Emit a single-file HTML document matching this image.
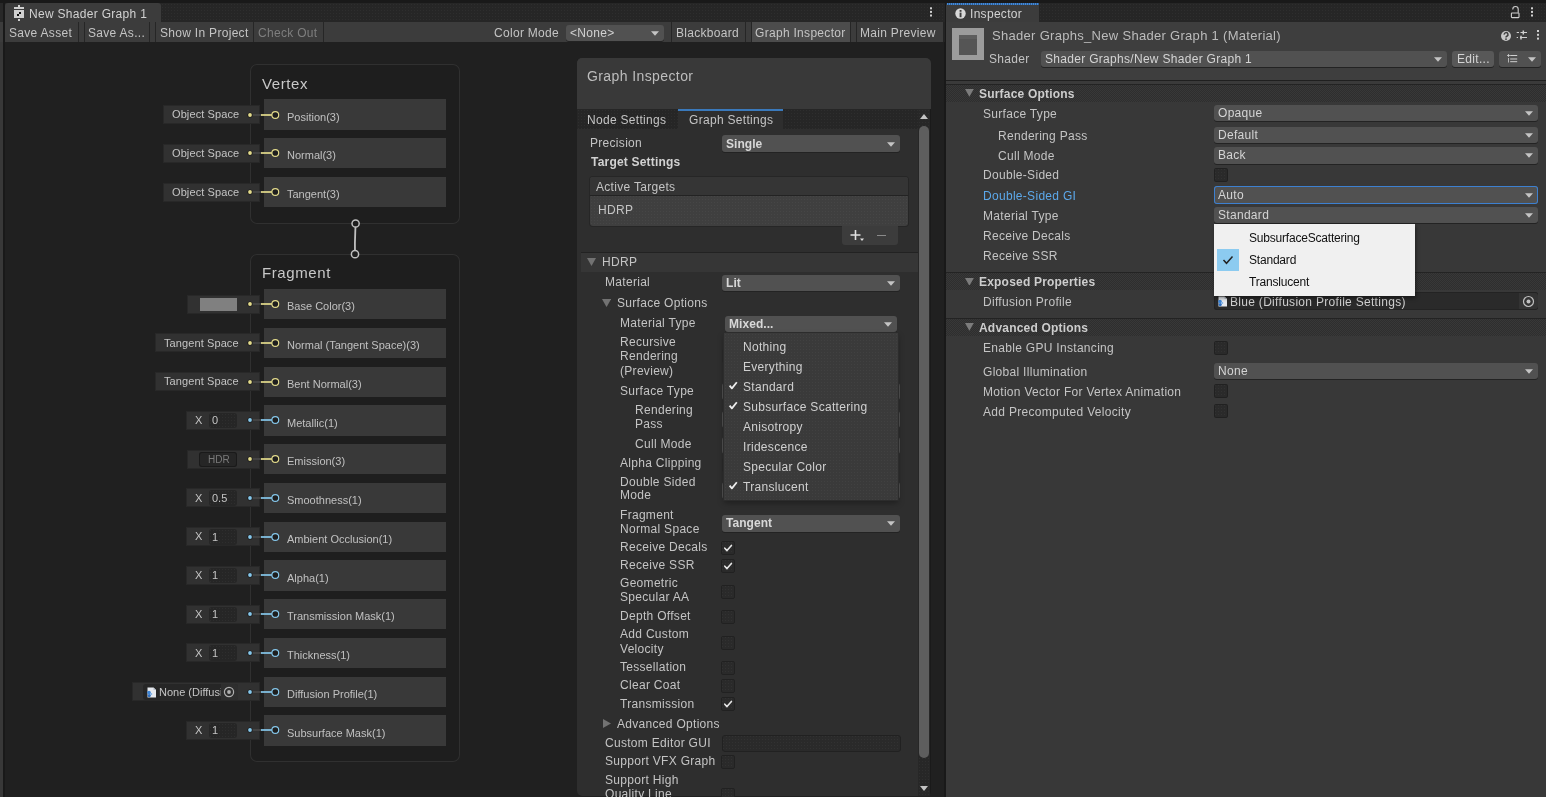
<!DOCTYPE html>
<html><head><meta charset="utf-8"><style>
html,body{margin:0;padding:0;width:1546px;height:797px;overflow:hidden;background:#191919;}
body{position:relative;font-family:"Liberation Sans", sans-serif;}
body>div,body>svg{position:absolute;}
.t{white-space:nowrap;line-height:1;will-change:transform;}
</style></head><body>
<div style="left:0px;top:0px;width:1546px;height:797px;background:#191919;"></div>
<div style="left:0px;top:3px;width:3px;height:794px;background:#383838;"></div>
<div style="left:0px;top:3px;width:3px;height:19px;background:#282828;"></div>
<div style="left:0px;top:22px;width:3px;height:20px;background:#3c3c3c;"></div>
<div style="left:5px;top:3px;width:940px;height:19px;background:#262626;background-image:radial-gradient(rgba(255,255,255,0.035) 0.6px, transparent 0.7px);background-size:3px 3px;"></div>
<div style="left:5px;top:3px;width:156px;height:19px;background:#3c3c3c;border-radius:3px 3px 0 0;"></div>
<svg style="left:13px;top:4px;" width="12" height="18" viewBox="0 0 12 18">
<rect x="1" y="3" width="10" height="2" fill="#d0d0d0"/>
<rect x="5" y="1" width="2" height="2" fill="#d0d0d0"/>
<rect x="1" y="6" width="10" height="8" fill="#cfcfcf"/>
<rect x="6" y="8" width="2" height="2" fill="#111"/>
<rect x="4" y="10" width="2" height="2" fill="#111"/>
<rect x="5" y="15" width="2" height="2" fill="#d0d0d0"/>
</svg>
<div class="t" style="left:29.2px;top:7.84px;font-size:12px;color:#d2d2d2;letter-spacing:0.3px;">New Shader Graph 1</div>
<svg style="left:929px;top:6px;" width="4" height="12" viewBox="0 0 4 12"><rect x="1" y="1.3" width="2" height="2" fill="#d0d0d0"/><rect x="1" y="4.9" width="2" height="2" fill="#d0d0d0"/><rect x="1" y="8.5" width="2" height="2" fill="#d0d0d0"/></svg>
<div style="left:5px;top:22px;width:939px;height:20px;background:#3c3c3c;"></div>
<div style="left:78px;top:22px;width:1px;height:20px;background:#262626;"></div>
<div style="left:84px;top:22px;width:1px;height:20px;background:#262626;"></div>
<div style="left:149px;top:22px;width:1px;height:20px;background:#262626;"></div>
<div style="left:155px;top:22px;width:1px;height:20px;background:#262626;"></div>
<div style="left:253px;top:22px;width:1px;height:20px;background:#262626;"></div>
<div style="left:323px;top:22px;width:1px;height:20px;background:#262626;"></div>
<div style="left:671px;top:22px;width:1px;height:20px;background:#262626;"></div>
<div style="left:745px;top:22px;width:1px;height:20px;background:#262626;"></div>
<div style="left:751px;top:22px;width:1px;height:20px;background:#262626;"></div>
<div style="left:850px;top:22px;width:1px;height:20px;background:#262626;"></div>
<div style="left:856px;top:22px;width:1px;height:20px;background:#262626;"></div>
<div class="t" style="left:8.6px;top:26.84px;font-size:12px;color:#c4c4c4;letter-spacing:0.3px;">Save Asset</div>
<div class="t" style="left:87.5px;top:26.84px;font-size:12px;color:#c4c4c4;letter-spacing:0.3px;">Save As...</div>
<div class="t" style="left:160.0px;top:26.84px;font-size:12px;color:#c4c4c4;letter-spacing:0.3px;">Show In Project</div>
<div class="t" style="left:258.0px;top:26.84px;font-size:12px;color:#7e7e7e;letter-spacing:0.3px;">Check Out</div>
<div class="t" style="left:494.2px;top:26.84px;font-size:12px;color:#c4c4c4;letter-spacing:0.3px;">Color Mode</div>
<div style="left:566px;top:25px;width:98px;height:16px;background:#515151;border-radius:3px;box-shadow:0 1px 0 #232323;"></div>
<div class="t" style="left:569.8000000000001px;top:27.14px;font-size:12px;color:#d2d2d2;letter-spacing:0.3px;">&lt;None&gt;</div>
<svg style="left:651px;top:31.0px;" width="8" height="5" viewBox="0 0 8 5"><polygon points="0,0.2 8,0.2 4,4.7" fill="#c4c4c4"/></svg>
<div class="t" style="left:676.0px;top:26.84px;font-size:12px;color:#c4c4c4;letter-spacing:0.3px;">Blackboard</div>
<div style="left:752px;top:22px;width:98px;height:20px;background:#4c4c4c;"></div>
<div class="t" style="left:755.0px;top:26.84px;font-size:12px;color:#c4c4c4;letter-spacing:0.3px;">Graph Inspector</div>
<div class="t" style="left:860.0px;top:26.84px;font-size:12px;color:#c4c4c4;letter-spacing:0.3px;">Main Preview</div>
<div style="left:943px;top:22px;width:2px;height:20px;background:#232323;"></div>
<div style="left:5px;top:42px;width:939px;height:755px;background:#202020;"></div>
<div style="left:250px;top:64px;width:210px;height:160px;background:#1e1e1e;border-radius:7px;box-shadow:inset 0 0 0 1px #303030;"></div>
<div class="t" style="left:261.7px;top:75.90px;font-size:15px;color:#c8c8c8;letter-spacing:0.6px;">Vertex</div>
<div style="left:164px;top:106.0px;width:95px;height:17px;background:#313131;box-shadow:0 0 0 1px #282828;"></div>
<div class="t" style="left:172.2px;top:109.19px;font-size:11px;color:#c4c4c4;letter-spacing:0.1px;">Object Space</div>
<div style="left:264px;top:99.3px;width:182px;height:30.3px;background:#393939;"></div>
<svg style="left:246px;top:106.5px;" width="36" height="16" viewBox="0 0 36 16">
<line x1="4" y1="8" x2="16" y2="8" stroke="#4a4a4a" stroke-width="1.6"/>
<line x1="15" y1="8" x2="26" y2="8" stroke="#e4dc8c" stroke-width="1.7"/>
<circle cx="4" cy="8" r="2.6" fill="#181818"/><circle cx="4" cy="8" r="1.9" fill="#e4dc8c"/>
<circle cx="29.3" cy="8" r="3.4" fill="#1e1e1e" stroke="#e4dc8c" stroke-width="1.15"/></svg>
<div class="t" style="left:287.2px;top:111.59px;font-size:11px;color:#c0c0c0;">Position(3)</div>
<div style="left:164px;top:144.75px;width:95px;height:17px;background:#313131;box-shadow:0 0 0 1px #282828;"></div>
<div class="t" style="left:172.2px;top:147.94px;font-size:11px;color:#c4c4c4;letter-spacing:0.1px;">Object Space</div>
<div style="left:264px;top:138.05px;width:182px;height:30.3px;background:#393939;"></div>
<svg style="left:246px;top:145.25px;" width="36" height="16" viewBox="0 0 36 16">
<line x1="4" y1="8" x2="16" y2="8" stroke="#4a4a4a" stroke-width="1.6"/>
<line x1="15" y1="8" x2="26" y2="8" stroke="#e4dc8c" stroke-width="1.7"/>
<circle cx="4" cy="8" r="2.6" fill="#181818"/><circle cx="4" cy="8" r="1.9" fill="#e4dc8c"/>
<circle cx="29.3" cy="8" r="3.4" fill="#1e1e1e" stroke="#e4dc8c" stroke-width="1.15"/></svg>
<div class="t" style="left:287.2px;top:150.34px;font-size:11px;color:#c0c0c0;">Normal(3)</div>
<div style="left:164px;top:183.5px;width:95px;height:17px;background:#313131;box-shadow:0 0 0 1px #282828;"></div>
<div class="t" style="left:172.2px;top:186.69px;font-size:11px;color:#c4c4c4;letter-spacing:0.1px;">Object Space</div>
<div style="left:264px;top:176.8px;width:182px;height:30.3px;background:#393939;"></div>
<svg style="left:246px;top:184.0px;" width="36" height="16" viewBox="0 0 36 16">
<line x1="4" y1="8" x2="16" y2="8" stroke="#4a4a4a" stroke-width="1.6"/>
<line x1="15" y1="8" x2="26" y2="8" stroke="#e4dc8c" stroke-width="1.7"/>
<circle cx="4" cy="8" r="2.6" fill="#181818"/><circle cx="4" cy="8" r="1.9" fill="#e4dc8c"/>
<circle cx="29.3" cy="8" r="3.4" fill="#1e1e1e" stroke="#e4dc8c" stroke-width="1.15"/></svg>
<div class="t" style="left:287.2px;top:189.09px;font-size:11px;color:#c0c0c0;">Tangent(3)</div>
<div style="left:250px;top:254px;width:210px;height:508px;background:#1e1e1e;border-radius:7px;box-shadow:inset 0 0 0 1px #303030;"></div>
<div class="t" style="left:261.7px;top:265.20px;font-size:15px;color:#c8c8c8;letter-spacing:0.6px;">Fragment</div>
<div style="left:188px;top:295.7px;width:71px;height:17px;background:#313131;box-shadow:0 0 0 1px #282828;"></div>
<div style="left:200px;top:298.0px;width:37px;height:13px;background:#808080;"></div>
<div style="left:264px;top:289.0px;width:182px;height:30.3px;background:#393939;"></div>
<svg style="left:246px;top:296.2px;" width="36" height="16" viewBox="0 0 36 16">
<line x1="4" y1="8" x2="16" y2="8" stroke="#4a4a4a" stroke-width="1.6"/>
<line x1="15" y1="8" x2="26" y2="8" stroke="#e4dc8c" stroke-width="1.7"/>
<circle cx="4" cy="8" r="2.6" fill="#181818"/><circle cx="4" cy="8" r="1.9" fill="#e4dc8c"/>
<circle cx="29.3" cy="8" r="3.4" fill="#1e1e1e" stroke="#e4dc8c" stroke-width="1.15"/></svg>
<div class="t" style="left:287.2px;top:301.29px;font-size:11px;color:#c0c0c0;">Base Color(3)</div>
<div style="left:155.5px;top:334.45px;width:103.5px;height:17px;background:#313131;box-shadow:0 0 0 1px #282828;"></div>
<div class="t" style="left:164.2px;top:337.64px;font-size:11px;color:#c4c4c4;letter-spacing:0.1px;">Tangent Space</div>
<div style="left:264px;top:327.75px;width:182px;height:30.3px;background:#393939;"></div>
<svg style="left:246px;top:334.95px;" width="36" height="16" viewBox="0 0 36 16">
<line x1="4" y1="8" x2="16" y2="8" stroke="#4a4a4a" stroke-width="1.6"/>
<line x1="15" y1="8" x2="26" y2="8" stroke="#e4dc8c" stroke-width="1.7"/>
<circle cx="4" cy="8" r="2.6" fill="#181818"/><circle cx="4" cy="8" r="1.9" fill="#e4dc8c"/>
<circle cx="29.3" cy="8" r="3.4" fill="#1e1e1e" stroke="#e4dc8c" stroke-width="1.15"/></svg>
<div class="t" style="left:287.2px;top:340.04px;font-size:11px;color:#c0c0c0;">Normal (Tangent Space)(3)</div>
<div style="left:155.5px;top:373.2px;width:103.5px;height:17px;background:#313131;box-shadow:0 0 0 1px #282828;"></div>
<div class="t" style="left:164.2px;top:376.39px;font-size:11px;color:#c4c4c4;letter-spacing:0.1px;">Tangent Space</div>
<div style="left:264px;top:366.5px;width:182px;height:30.3px;background:#393939;"></div>
<svg style="left:246px;top:373.7px;" width="36" height="16" viewBox="0 0 36 16">
<line x1="4" y1="8" x2="16" y2="8" stroke="#4a4a4a" stroke-width="1.6"/>
<line x1="15" y1="8" x2="26" y2="8" stroke="#e4dc8c" stroke-width="1.7"/>
<circle cx="4" cy="8" r="2.6" fill="#181818"/><circle cx="4" cy="8" r="1.9" fill="#e4dc8c"/>
<circle cx="29.3" cy="8" r="3.4" fill="#1e1e1e" stroke="#e4dc8c" stroke-width="1.15"/></svg>
<div class="t" style="left:287.2px;top:378.79px;font-size:11px;color:#c0c0c0;">Bent Normal(3)</div>
<div style="left:187px;top:411.95px;width:72px;height:17px;background:#313131;box-shadow:0 0 0 1px #282828;"></div>
<div class="t" style="left:195.2px;top:415.14px;font-size:11px;color:#c4c4c4;">X</div>
<div style="left:209px;top:412.75px;width:27.5px;height:15.5px;background:#262626;border-radius:3px;background-image:radial-gradient(rgba(255,255,255,0.035) 0.6px, transparent 0.7px);background-size:3px 3px;"></div>
<div class="t" style="left:211.7px;top:415.34px;font-size:11px;color:#c4c4c4;">0</div>
<div style="left:264px;top:405.25px;width:182px;height:30.3px;background:#393939;"></div>
<svg style="left:246px;top:412.45px;" width="36" height="16" viewBox="0 0 36 16">
<line x1="4" y1="8" x2="16" y2="8" stroke="#4a4a4a" stroke-width="1.6"/>
<line x1="15" y1="8" x2="26" y2="8" stroke="#86c8ec" stroke-width="1.7"/>
<circle cx="4" cy="8" r="2.6" fill="#181818"/><circle cx="4" cy="8" r="1.9" fill="#86c8ec"/>
<circle cx="29.3" cy="8" r="3.4" fill="#1e1e1e" stroke="#86c8ec" stroke-width="1.15"/></svg>
<div class="t" style="left:287.2px;top:417.54px;font-size:11px;color:#c0c0c0;">Metallic(1)</div>
<div style="left:188px;top:450.7px;width:71px;height:17px;background:#313131;box-shadow:0 0 0 1px #282828;"></div>
<div style="left:199px;top:452.0px;width:38.2px;height:14.5px;background:#262626;border-radius:3px;box-shadow:inset 0 0 0 1px #1a1a1a;"></div>
<div class="t" style="left:207.5px;top:454.54px;font-size:10px;color:#7a7a7a;">HDR</div>
<div style="left:264px;top:444.0px;width:182px;height:30.3px;background:#393939;"></div>
<svg style="left:246px;top:451.2px;" width="36" height="16" viewBox="0 0 36 16">
<line x1="4" y1="8" x2="16" y2="8" stroke="#4a4a4a" stroke-width="1.6"/>
<line x1="15" y1="8" x2="26" y2="8" stroke="#e4dc8c" stroke-width="1.7"/>
<circle cx="4" cy="8" r="2.6" fill="#181818"/><circle cx="4" cy="8" r="1.9" fill="#e4dc8c"/>
<circle cx="29.3" cy="8" r="3.4" fill="#1e1e1e" stroke="#e4dc8c" stroke-width="1.15"/></svg>
<div class="t" style="left:287.2px;top:456.29px;font-size:11px;color:#c0c0c0;">Emission(3)</div>
<div style="left:187px;top:489.45px;width:72px;height:17px;background:#313131;box-shadow:0 0 0 1px #282828;"></div>
<div class="t" style="left:195.2px;top:492.64px;font-size:11px;color:#c4c4c4;">X</div>
<div style="left:209px;top:490.25px;width:27.5px;height:15.5px;background:#262626;border-radius:3px;background-image:radial-gradient(rgba(255,255,255,0.035) 0.6px, transparent 0.7px);background-size:3px 3px;"></div>
<div class="t" style="left:211.7px;top:492.84px;font-size:11px;color:#c4c4c4;">0.5</div>
<div style="left:264px;top:482.75px;width:182px;height:30.3px;background:#393939;"></div>
<svg style="left:246px;top:489.95px;" width="36" height="16" viewBox="0 0 36 16">
<line x1="4" y1="8" x2="16" y2="8" stroke="#4a4a4a" stroke-width="1.6"/>
<line x1="15" y1="8" x2="26" y2="8" stroke="#86c8ec" stroke-width="1.7"/>
<circle cx="4" cy="8" r="2.6" fill="#181818"/><circle cx="4" cy="8" r="1.9" fill="#86c8ec"/>
<circle cx="29.3" cy="8" r="3.4" fill="#1e1e1e" stroke="#86c8ec" stroke-width="1.15"/></svg>
<div class="t" style="left:287.2px;top:495.04px;font-size:11px;color:#c0c0c0;">Smoothness(1)</div>
<div style="left:187px;top:528.2px;width:72px;height:17px;background:#313131;box-shadow:0 0 0 1px #282828;"></div>
<div class="t" style="left:195.2px;top:531.39px;font-size:11px;color:#c4c4c4;">X</div>
<div style="left:209px;top:529.0px;width:27.5px;height:15.5px;background:#262626;border-radius:3px;background-image:radial-gradient(rgba(255,255,255,0.035) 0.6px, transparent 0.7px);background-size:3px 3px;"></div>
<div class="t" style="left:211.7px;top:531.59px;font-size:11px;color:#c4c4c4;">1</div>
<div style="left:264px;top:521.5px;width:182px;height:30.3px;background:#393939;"></div>
<svg style="left:246px;top:528.7px;" width="36" height="16" viewBox="0 0 36 16">
<line x1="4" y1="8" x2="16" y2="8" stroke="#4a4a4a" stroke-width="1.6"/>
<line x1="15" y1="8" x2="26" y2="8" stroke="#86c8ec" stroke-width="1.7"/>
<circle cx="4" cy="8" r="2.6" fill="#181818"/><circle cx="4" cy="8" r="1.9" fill="#86c8ec"/>
<circle cx="29.3" cy="8" r="3.4" fill="#1e1e1e" stroke="#86c8ec" stroke-width="1.15"/></svg>
<div class="t" style="left:287.2px;top:533.79px;font-size:11px;color:#c0c0c0;">Ambient Occlusion(1)</div>
<div style="left:187px;top:566.95px;width:72px;height:17px;background:#313131;box-shadow:0 0 0 1px #282828;"></div>
<div class="t" style="left:195.2px;top:570.14px;font-size:11px;color:#c4c4c4;">X</div>
<div style="left:209px;top:567.75px;width:27.5px;height:15.5px;background:#262626;border-radius:3px;background-image:radial-gradient(rgba(255,255,255,0.035) 0.6px, transparent 0.7px);background-size:3px 3px;"></div>
<div class="t" style="left:211.7px;top:570.34px;font-size:11px;color:#c4c4c4;">1</div>
<div style="left:264px;top:560.25px;width:182px;height:30.3px;background:#393939;"></div>
<svg style="left:246px;top:567.45px;" width="36" height="16" viewBox="0 0 36 16">
<line x1="4" y1="8" x2="16" y2="8" stroke="#4a4a4a" stroke-width="1.6"/>
<line x1="15" y1="8" x2="26" y2="8" stroke="#86c8ec" stroke-width="1.7"/>
<circle cx="4" cy="8" r="2.6" fill="#181818"/><circle cx="4" cy="8" r="1.9" fill="#86c8ec"/>
<circle cx="29.3" cy="8" r="3.4" fill="#1e1e1e" stroke="#86c8ec" stroke-width="1.15"/></svg>
<div class="t" style="left:287.2px;top:572.54px;font-size:11px;color:#c0c0c0;">Alpha(1)</div>
<div style="left:187px;top:605.7px;width:72px;height:17px;background:#313131;box-shadow:0 0 0 1px #282828;"></div>
<div class="t" style="left:195.2px;top:608.89px;font-size:11px;color:#c4c4c4;">X</div>
<div style="left:209px;top:606.5px;width:27.5px;height:15.5px;background:#262626;border-radius:3px;background-image:radial-gradient(rgba(255,255,255,0.035) 0.6px, transparent 0.7px);background-size:3px 3px;"></div>
<div class="t" style="left:211.7px;top:609.09px;font-size:11px;color:#c4c4c4;">1</div>
<div style="left:264px;top:599.0px;width:182px;height:30.3px;background:#393939;"></div>
<svg style="left:246px;top:606.2px;" width="36" height="16" viewBox="0 0 36 16">
<line x1="4" y1="8" x2="16" y2="8" stroke="#4a4a4a" stroke-width="1.6"/>
<line x1="15" y1="8" x2="26" y2="8" stroke="#86c8ec" stroke-width="1.7"/>
<circle cx="4" cy="8" r="2.6" fill="#181818"/><circle cx="4" cy="8" r="1.9" fill="#86c8ec"/>
<circle cx="29.3" cy="8" r="3.4" fill="#1e1e1e" stroke="#86c8ec" stroke-width="1.15"/></svg>
<div class="t" style="left:287.2px;top:611.29px;font-size:11px;color:#c0c0c0;">Transmission Mask(1)</div>
<div style="left:187px;top:644.45px;width:72px;height:17px;background:#313131;box-shadow:0 0 0 1px #282828;"></div>
<div class="t" style="left:195.2px;top:647.64px;font-size:11px;color:#c4c4c4;">X</div>
<div style="left:209px;top:645.25px;width:27.5px;height:15.5px;background:#262626;border-radius:3px;background-image:radial-gradient(rgba(255,255,255,0.035) 0.6px, transparent 0.7px);background-size:3px 3px;"></div>
<div class="t" style="left:211.7px;top:647.84px;font-size:11px;color:#c4c4c4;">1</div>
<div style="left:264px;top:637.75px;width:182px;height:30.3px;background:#393939;"></div>
<svg style="left:246px;top:644.95px;" width="36" height="16" viewBox="0 0 36 16">
<line x1="4" y1="8" x2="16" y2="8" stroke="#4a4a4a" stroke-width="1.6"/>
<line x1="15" y1="8" x2="26" y2="8" stroke="#86c8ec" stroke-width="1.7"/>
<circle cx="4" cy="8" r="2.6" fill="#181818"/><circle cx="4" cy="8" r="1.9" fill="#86c8ec"/>
<circle cx="29.3" cy="8" r="3.4" fill="#1e1e1e" stroke="#86c8ec" stroke-width="1.15"/></svg>
<div class="t" style="left:287.2px;top:650.04px;font-size:11px;color:#c0c0c0;">Thickness(1)</div>
<div style="left:133px;top:683.2px;width:126px;height:17px;background:#313131;box-shadow:0 0 0 1px #282828;"></div>
<div style="left:143px;top:684.0px;width:94.5px;height:16px;background:#262626;border-radius:3px;"></div>
<svg style="left:146px;top:686.5px;" width="11" height="11" viewBox="0 0 11 11"><path d="M1.5 0.5 H7.5 L10 3 V10.5 H1.5Z" fill="#e6e9ee"/><path d="M7.5 0.5 V3 H10" fill="#b8c0ca"/><circle cx="3" cy="5.5" r="1.8" fill="#3d86d8"/><circle cx="3.2" cy="8.6" r="1.6" fill="#2f6fc0"/><circle cx="5.2" cy="7" r="1.1" fill="#7fb2e8"/></svg>
<div class="t" style="left:159px;top:686.50px;width:62px;overflow:hidden;font-size:11px;color:#c4c4c4;">None (Diffusion Profile Settings)</div>
<div style="left:221px;top:684.0px;width:16.5px;height:16px;background:#2e2e2e;border-radius:0 3px 3px 0;"></div>
<svg style="left:223px;top:686.0px;" width="12" height="12" viewBox="0 0 12 12"><circle cx="6" cy="6" r="4.6" fill="none" stroke="#b0b0b0" stroke-width="1.2"/><circle cx="6" cy="6" r="1.9" fill="#b0b0b0"/></svg>
<div style="left:264px;top:676.5px;width:182px;height:30.3px;background:#393939;"></div>
<svg style="left:246px;top:683.7px;" width="36" height="16" viewBox="0 0 36 16">
<line x1="4" y1="8" x2="16" y2="8" stroke="#4a4a4a" stroke-width="1.6"/>
<line x1="15" y1="8" x2="26" y2="8" stroke="#86c8ec" stroke-width="1.7"/>
<circle cx="4" cy="8" r="2.6" fill="#181818"/><circle cx="4" cy="8" r="1.9" fill="#86c8ec"/>
<circle cx="29.3" cy="8" r="3.4" fill="#1e1e1e" stroke="#86c8ec" stroke-width="1.15"/></svg>
<div class="t" style="left:287.2px;top:688.79px;font-size:11px;color:#c0c0c0;">Diffusion Profile(1)</div>
<div style="left:187px;top:721.95px;width:72px;height:17px;background:#313131;box-shadow:0 0 0 1px #282828;"></div>
<div class="t" style="left:195.2px;top:725.14px;font-size:11px;color:#c4c4c4;">X</div>
<div style="left:209px;top:722.75px;width:27.5px;height:15.5px;background:#262626;border-radius:3px;background-image:radial-gradient(rgba(255,255,255,0.035) 0.6px, transparent 0.7px);background-size:3px 3px;"></div>
<div class="t" style="left:211.7px;top:725.34px;font-size:11px;color:#c4c4c4;">1</div>
<div style="left:264px;top:715.25px;width:182px;height:30.3px;background:#393939;"></div>
<svg style="left:246px;top:722.45px;" width="36" height="16" viewBox="0 0 36 16">
<line x1="4" y1="8" x2="16" y2="8" stroke="#4a4a4a" stroke-width="1.6"/>
<line x1="15" y1="8" x2="26" y2="8" stroke="#86c8ec" stroke-width="1.7"/>
<circle cx="4" cy="8" r="2.6" fill="#181818"/><circle cx="4" cy="8" r="1.9" fill="#86c8ec"/>
<circle cx="29.3" cy="8" r="3.4" fill="#1e1e1e" stroke="#86c8ec" stroke-width="1.15"/></svg>
<div class="t" style="left:287.2px;top:727.54px;font-size:11px;color:#c0c0c0;">Subsurface Mask(1)</div>
<svg style="left:348px;top:216px;" width="16" height="46" viewBox="0 0 16 46">
<path d="M7.6 7.5 C7.4 16 6.6 22 7 38" fill="none" stroke="#c0c0c0" stroke-width="1.8"/>
<circle cx="7.6" cy="7.5" r="3.6" fill="#1e1e1e" stroke="#c0c0c0" stroke-width="1.5"/>
<circle cx="7" cy="38.2" r="3.6" fill="#1e1e1e" stroke="#c0c0c0" stroke-width="1.5"/></svg>
<div style="left:577px;top:58px;width:354px;height:738px;background:#1a1a1a;border-radius:5px;"></div>
<div style="left:577px;top:58px;width:353px;height:738px;background:#2e2e2e;border-radius:5px;"></div>
<div style="left:577px;top:58px;width:353.5px;height:51px;background:#393939;border-radius:5px 5px 0 0;"></div>
<div class="t" style="left:587.2px;top:68.75px;font-size:14px;color:#bdbdbd;letter-spacing:0.4px;">Graph Inspector</div>
<div style="left:577px;top:109px;width:341px;height:20px;background:#262626;background-image:radial-gradient(rgba(255,255,255,0.035) 0.6px, transparent 0.7px);background-size:3px 3px;"></div>
<div style="left:678px;top:109px;width:105px;height:20px;background:#2e2e2e;"></div>
<div style="left:678px;top:109px;width:105px;height:2px;background:#3a79bb;"></div>
<div class="t" style="left:587.2px;top:113.84px;font-size:12px;color:#c4c4c4;letter-spacing:0.3px;">Node Settings</div>
<div class="t" style="left:688.6px;top:113.84px;font-size:12px;color:#c4c4c4;letter-spacing:0.3px;">Graph Settings</div>
<div style="left:918px;top:109px;width:12px;height:687px;background:#272727;background-image:radial-gradient(rgba(255,255,255,0.035) 0.6px, transparent 0.7px);background-size:3px 3px;"></div>
<svg style="left:919px;top:113px;" width="10" height="7" viewBox="0 0 10 7"><polygon points="1,6 9,6 5,1" fill="#c4c4c4"/></svg>
<div style="left:919px;top:126px;width:10px;height:632px;background:#5e5e5e;border-radius:5px;"></div>
<svg style="left:919px;top:785px;" width="10" height="7" viewBox="0 0 10 7"><polygon points="1,1 9,1 5,6" fill="#c4c4c4"/></svg>
<div class="t" style="left:589.9000000000001px;top:136.84px;font-size:12px;color:#c4c4c4;letter-spacing:0.3px;">Precision</div>
<div style="left:722px;top:135px;width:178px;height:17px;background:#515151;border-radius:3px;box-shadow:0 1px 0 #232323;"></div>
<div class="t" style="left:725.8000000000001px;top:137.64px;font-size:12px;color:#d8d8d8;font-weight:bold;letter-spacing:0.05px;">Single</div>
<svg style="left:887px;top:141.5px;" width="8" height="5" viewBox="0 0 8 5"><polygon points="0,0.2 8,0.2 4,4.7" fill="#c4c4c4"/></svg>
<div class="t" style="left:590.5px;top:155.54px;font-size:12px;color:#d2d2d2;font-weight:bold;letter-spacing:0.2px;">Target Settings</div>
<div style="left:590px;top:177px;width:318px;height:49px;background:#3f3f3f;border-radius:3px;box-shadow:0 0 0 1px #262626;background-image:radial-gradient(rgba(255,255,255,0.035) 0.6px, transparent 0.7px);background-size:3px 3px;"></div>
<div style="left:590px;top:177px;width:318px;height:18px;background:#353535;border-radius:3px 3px 0 0;"></div>
<div style="left:590px;top:195px;width:318px;height:1px;background:#232323;"></div>
<div class="t" style="left:596.4000000000001px;top:180.84px;font-size:12px;color:#c4c4c4;letter-spacing:0.3px;">Active Targets</div>
<div class="t" style="left:597.5px;top:203.54px;font-size:12px;color:#c4c4c4;letter-spacing:0.3px;">HDRP</div>
<div style="left:842px;top:226px;width:56px;height:18.5px;background:#3c3c3c;border-radius:0 0 3px 3px;"></div>
<svg style="left:850px;top:229px;" width="14" height="13" viewBox="0 0 14 13"><path d="M5.5 1 V11 M0.5 6 H10.5" stroke="#e0e0e0" stroke-width="1.6"/><polygon points="10,9.5 14,9.5 12,12" fill="#e0e0e0"/></svg>
<div style="left:877px;top:234.5px;width:9px;height:1.6px;background:#8a8a8a;"></div>
<div style="left:581px;top:251.5px;width:337px;height:1px;background:#222222;"></div>
<div style="left:581px;top:252.5px;width:337px;height:19.5px;background:#363636;"></div>
<svg style="left:586.8px;top:257.6px;" width="9" height="8" viewBox="0 0 9 8"><polygon points="0,0 9,0 4.5,8" fill="#727272"/></svg>
<div class="t" style="left:601.7px;top:255.54px;font-size:12px;color:#c4c4c4;letter-spacing:0.3px;">HDRP</div>
<div class="t" style="left:604.7px;top:275.54px;font-size:12px;color:#c4c4c4;letter-spacing:0.3px;">Material</div>
<div style="left:722px;top:274.5px;width:178px;height:16.5px;background:#515151;border-radius:3px;box-shadow:0 1px 0 #232323;"></div>
<div class="t" style="left:725.8000000000001px;top:276.89px;font-size:12px;color:#d8d8d8;font-weight:bold;letter-spacing:0.05px;">Lit</div>
<svg style="left:887px;top:280.75px;" width="8" height="5" viewBox="0 0 8 5"><polygon points="0,0.2 8,0.2 4,4.7" fill="#c4c4c4"/></svg>
<svg style="left:602px;top:298.8px;" width="9.2" height="8.1" viewBox="0 0 9.2 8.1"><polygon points="0,0 9.2,0 4.6,8.1" fill="#727272"/></svg>
<div class="t" style="left:616.6px;top:296.64px;font-size:12px;color:#c4c4c4;letter-spacing:0.3px;">Surface Options</div>
<div class="t" style="left:619.7px;top:316.54px;font-size:12px;color:#c4c4c4;letter-spacing:0.3px;">Material Type</div>
<div style="left:725px;top:315.5px;width:172px;height:16.5px;background:#515151;border-radius:3px;box-shadow:0 1px 0 #232323;"></div>
<div class="t" style="left:728.8000000000001px;top:317.89px;font-size:12px;color:#d8d8d8;font-weight:bold;letter-spacing:0.05px;">Mixed...</div>
<svg style="left:884px;top:321.75px;" width="8" height="5" viewBox="0 0 8 5"><polygon points="0,0.2 8,0.2 4,4.7" fill="#c4c4c4"/></svg>
<div class="t" style="left:619.7px;top:336.14px;font-size:12px;color:#c4c4c4;letter-spacing:0.3px;">Recursive</div>
<div class="t" style="left:619.7px;top:349.84px;font-size:12px;color:#c4c4c4;letter-spacing:0.3px;">Rendering</div>
<div class="t" style="left:619.7px;top:365.24px;font-size:12px;color:#c4c4c4;letter-spacing:0.3px;">(Preview)</div>
<div class="t" style="left:619.8000000000001px;top:384.54px;font-size:12px;color:#c4c4c4;letter-spacing:0.3px;">Surface Type</div>
<div class="t" style="left:634.7px;top:403.74px;font-size:12px;color:#c4c4c4;letter-spacing:0.3px;">Rendering</div>
<div class="t" style="left:634.7px;top:417.64px;font-size:12px;color:#c4c4c4;letter-spacing:0.3px;">Pass</div>
<div class="t" style="left:634.7px;top:438.34px;font-size:12px;color:#c4c4c4;letter-spacing:0.3px;">Cull Mode</div>
<div class="t" style="left:619.8000000000001px;top:457.34px;font-size:12px;color:#c4c4c4;letter-spacing:0.3px;">Alpha Clipping</div>
<div class="t" style="left:619.8000000000001px;top:475.64px;font-size:12px;color:#c4c4c4;letter-spacing:0.3px;">Double Sided</div>
<div class="t" style="left:619.8000000000001px;top:489.04px;font-size:12px;color:#c4c4c4;letter-spacing:0.3px;">Mode</div>
<div class="t" style="left:619.8000000000001px;top:508.74px;font-size:12px;color:#c4c4c4;letter-spacing:0.3px;">Fragment</div>
<div class="t" style="left:619.8000000000001px;top:522.64px;font-size:12px;color:#c4c4c4;letter-spacing:0.3px;">Normal Space</div>
<div style="left:722px;top:349px;width:14px;height:14px;background:#2a2a2a;border-radius:2px;"></div>
<div style="left:722px;top:383px;width:178px;height:16.5px;background:#515151;border-radius:3px;"></div>
<div style="left:722px;top:411px;width:178px;height:16.5px;background:#515151;border-radius:3px;"></div>
<div style="left:722px;top:437px;width:178px;height:16.5px;background:#515151;border-radius:3px;"></div>
<div style="left:722px;top:482px;width:178px;height:16.5px;background:#515151;border-radius:3px;"></div>
<div style="left:722px;top:458px;width:14px;height:14px;background:#2a2a2a;border-radius:2px;"></div>
<div style="left:722px;top:515px;width:178px;height:16.5px;background:#515151;border-radius:3px;box-shadow:0 1px 0 #232323;"></div>
<div class="t" style="left:725.8000000000001px;top:517.39px;font-size:12px;color:#d8d8d8;font-weight:bold;letter-spacing:0.05px;">Tangent</div>
<svg style="left:887px;top:521.25px;" width="8" height="5" viewBox="0 0 8 5"><polygon points="0,0.2 8,0.2 4,4.7" fill="#c4c4c4"/></svg>
<div class="t" style="left:619.8000000000001px;top:541.04px;font-size:12px;color:#c4c4c4;letter-spacing:0.3px;">Receive Decals</div>
<div style="left:721px;top:540.5px;width:14px;height:14px;background:#2a2a2a;border-radius:2px;box-shadow:inset 0 0 0 1px #212121;background-image:radial-gradient(rgba(255,255,255,0.035) 0.6px, transparent 0.7px);background-size:3px 3px;"></div>
<svg style="left:723px;top:542.5px;" width="10" height="10" viewBox="0 0 10 10"><polyline points="1.8,5.2 4,7.6 8.4,2.4" fill="none" stroke="#e6e6e6" stroke-width="1.6" stroke-linecap="round" stroke-linejoin="round"/></svg>
<div class="t" style="left:619.8000000000001px;top:559.34px;font-size:12px;color:#c4c4c4;letter-spacing:0.3px;">Receive SSR</div>
<div style="left:721px;top:558.5px;width:14px;height:14px;background:#2a2a2a;border-radius:2px;box-shadow:inset 0 0 0 1px #212121;background-image:radial-gradient(rgba(255,255,255,0.035) 0.6px, transparent 0.7px);background-size:3px 3px;"></div>
<svg style="left:723px;top:560.5px;" width="10" height="10" viewBox="0 0 10 10"><polyline points="1.8,5.2 4,7.6 8.4,2.4" fill="none" stroke="#e6e6e6" stroke-width="1.6" stroke-linecap="round" stroke-linejoin="round"/></svg>
<div class="t" style="left:619.8000000000001px;top:577.24px;font-size:12px;color:#c4c4c4;letter-spacing:0.3px;">Geometric</div>
<div class="t" style="left:619.8000000000001px;top:591.44px;font-size:12px;color:#c4c4c4;letter-spacing:0.3px;">Specular AA</div>
<div style="left:721px;top:585px;width:14px;height:14px;background:#2a2a2a;border-radius:2px;box-shadow:inset 0 0 0 1px #212121;background-image:radial-gradient(rgba(255,255,255,0.035) 0.6px, transparent 0.7px);background-size:3px 3px;"></div>
<div class="t" style="left:619.8000000000001px;top:610.24px;font-size:12px;color:#c4c4c4;letter-spacing:0.3px;">Depth Offset</div>
<div style="left:721px;top:610px;width:14px;height:14px;background:#2a2a2a;border-radius:2px;box-shadow:inset 0 0 0 1px #212121;background-image:radial-gradient(rgba(255,255,255,0.035) 0.6px, transparent 0.7px);background-size:3px 3px;"></div>
<div class="t" style="left:619.8000000000001px;top:628.04px;font-size:12px;color:#c4c4c4;letter-spacing:0.3px;">Add Custom</div>
<div class="t" style="left:619.8000000000001px;top:642.64px;font-size:12px;color:#c4c4c4;letter-spacing:0.3px;">Velocity</div>
<div style="left:721px;top:636px;width:14px;height:14px;background:#2a2a2a;border-radius:2px;box-shadow:inset 0 0 0 1px #212121;background-image:radial-gradient(rgba(255,255,255,0.035) 0.6px, transparent 0.7px);background-size:3px 3px;"></div>
<div class="t" style="left:619.8000000000001px;top:660.84px;font-size:12px;color:#c4c4c4;letter-spacing:0.3px;">Tessellation</div>
<div style="left:721px;top:660.5px;width:14px;height:14px;background:#2a2a2a;border-radius:2px;box-shadow:inset 0 0 0 1px #212121;background-image:radial-gradient(rgba(255,255,255,0.035) 0.6px, transparent 0.7px);background-size:3px 3px;"></div>
<div class="t" style="left:619.8000000000001px;top:679.24px;font-size:12px;color:#c4c4c4;letter-spacing:0.3px;">Clear Coat</div>
<div style="left:721px;top:679px;width:14px;height:14px;background:#2a2a2a;border-radius:2px;box-shadow:inset 0 0 0 1px #212121;background-image:radial-gradient(rgba(255,255,255,0.035) 0.6px, transparent 0.7px);background-size:3px 3px;"></div>
<div class="t" style="left:619.8000000000001px;top:697.64px;font-size:12px;color:#c4c4c4;letter-spacing:0.3px;">Transmission</div>
<div style="left:721px;top:697px;width:14px;height:14px;background:#2a2a2a;border-radius:2px;box-shadow:inset 0 0 0 1px #212121;background-image:radial-gradient(rgba(255,255,255,0.035) 0.6px, transparent 0.7px);background-size:3px 3px;"></div>
<svg style="left:723px;top:699px;" width="10" height="10" viewBox="0 0 10 10"><polyline points="1.8,5.2 4,7.6 8.4,2.4" fill="none" stroke="#e6e6e6" stroke-width="1.6" stroke-linecap="round" stroke-linejoin="round"/></svg>
<svg style="left:602.5px;top:719px;" width="8" height="9" viewBox="0 0 8 9"><polygon points="0,0 8,4.5 0,9" fill="#727272"/></svg>
<div class="t" style="left:616.6px;top:718.04px;font-size:12px;color:#c4c4c4;letter-spacing:0.3px;">Advanced Options</div>
<div class="t" style="left:605.4000000000001px;top:737.24px;font-size:12px;color:#c4c4c4;letter-spacing:0.3px;">Custom Editor GUI</div>
<div style="left:721.5px;top:735.3px;width:179px;height:17.2px;background:#2a2a2a;border-radius:3px;box-shadow:inset 0 0 0 1px #212121;background-image:radial-gradient(rgba(255,255,255,0.035) 0.6px, transparent 0.7px);background-size:3px 3px;"></div>
<div class="t" style="left:605.4000000000001px;top:755.34px;font-size:12px;color:#c4c4c4;letter-spacing:0.3px;">Support VFX Graph</div>
<div style="left:721px;top:755px;width:14px;height:14px;background:#2a2a2a;border-radius:2px;box-shadow:inset 0 0 0 1px #212121;background-image:radial-gradient(rgba(255,255,255,0.035) 0.6px, transparent 0.7px);background-size:3px 3px;"></div>
<div class="t" style="left:605.4000000000001px;top:773.74px;font-size:12px;color:#c4c4c4;letter-spacing:0.3px;">Support High</div>
<div class="t" style="left:605.4000000000001px;top:788.04px;font-size:12px;color:#c4c4c4;letter-spacing:0.3px;">Quality Line</div>
<div style="left:721px;top:788px;width:14px;height:14px;background:#2a2a2a;border-radius:2px;box-shadow:inset 0 0 0 1px #212121;background-image:radial-gradient(rgba(255,255,255,0.035) 0.6px, transparent 0.7px);background-size:3px 3px;"></div>
<div style="left:724px;top:332.6px;width:174.4px;height:167.6px;background:#3a3a3a;box-shadow:0 0 0 1px #2c2c2c, 0 3px 6px rgba(0,0,0,0.35);background-image:radial-gradient(rgba(255,255,255,0.035) 0.6px, transparent 0.7px);background-size:3px 3px;"></div>
<div class="t" style="left:742.6px;top:341.14px;font-size:12px;color:#d0d0d0;letter-spacing:0.3px;">Nothing</div>
<div class="t" style="left:742.6px;top:361.14px;font-size:12px;color:#d0d0d0;letter-spacing:0.3px;">Everything</div>
<div class="t" style="left:742.6px;top:381.14px;font-size:12px;color:#d0d0d0;letter-spacing:0.3px;">Standard</div>
<svg style="left:728px;top:381px;" width="11" height="10" viewBox="0 0 11 10"><polyline points="1.6,4.6 3.9,7.4 8.8,1.2" fill="none" stroke="#ececec" stroke-width="1.8" stroke-linejoin="round"/></svg>
<div class="t" style="left:742.6px;top:401.14px;font-size:12px;color:#d0d0d0;letter-spacing:0.3px;">Subsurface Scattering</div>
<svg style="left:728px;top:401px;" width="11" height="10" viewBox="0 0 11 10"><polyline points="1.6,4.6 3.9,7.4 8.8,1.2" fill="none" stroke="#ececec" stroke-width="1.8" stroke-linejoin="round"/></svg>
<div class="t" style="left:742.6px;top:421.14px;font-size:12px;color:#d0d0d0;letter-spacing:0.3px;">Anisotropy</div>
<div class="t" style="left:742.6px;top:441.14px;font-size:12px;color:#d0d0d0;letter-spacing:0.3px;">Iridescence</div>
<div class="t" style="left:742.6px;top:461.14px;font-size:12px;color:#d0d0d0;letter-spacing:0.3px;">Specular Color</div>
<div class="t" style="left:742.6px;top:481.14px;font-size:12px;color:#d0d0d0;letter-spacing:0.3px;">Translucent</div>
<svg style="left:728px;top:481px;" width="11" height="10" viewBox="0 0 11 10"><polyline points="1.6,4.6 3.9,7.4 8.8,1.2" fill="none" stroke="#ececec" stroke-width="1.8" stroke-linejoin="round"/></svg>
<div style="left:946px;top:3px;width:600px;height:19px;background:#262626;background-image:radial-gradient(rgba(255,255,255,0.035) 0.6px, transparent 0.7px);background-size:3px 3px;"></div>
<div style="left:946px;top:3px;width:93px;height:19px;background:#3c3c3c;border-radius:3px 3px 0 0;"></div>
<div style="left:947px;top:3px;width:92px;height:2px;background:#3a6ea5;background-image:repeating-linear-gradient(90deg,#4289db 0 1.2px,#2f5f94 1.2px 2px);"></div>
<svg style="left:954.5px;top:7.7px;" width="11" height="11" viewBox="0 0 11 11"><circle cx="5.5" cy="5.5" r="5.2" fill="#d8d8d8"/><rect x="4.6" y="2" width="1.9" height="1.8" fill="#3c3c3c"/><rect x="4.6" y="4.6" width="1.9" height="4.6" fill="#3c3c3c"/></svg>
<div class="t" style="left:970.2px;top:7.84px;font-size:12px;color:#d2d2d2;letter-spacing:0.3px;">Inspector</div>
<svg style="left:1509px;top:5px;" width="12" height="14" viewBox="0 0 12 14"><path d="M3.8 4.6 V4.2 A2.7 2.7 0 0 1 9.2 4.2 V7.8" fill="none" stroke="#d0d0d0" stroke-width="1.1"/><rect x="2.4" y="8" width="7.6" height="4.6" rx="0.6" fill="none" stroke="#d0d0d0" stroke-width="1.1"/></svg>
<svg style="left:1530px;top:6px;" width="4" height="12" viewBox="0 0 4 12"><rect x="1" y="1.3" width="2" height="2" fill="#d0d0d0"/><rect x="1" y="4.9" width="2" height="2" fill="#d0d0d0"/><rect x="1" y="8.5" width="2" height="2" fill="#d0d0d0"/></svg>
<div style="left:946px;top:22px;width:600px;height:775px;background:#383838;"></div>
<div style="left:946px;top:22px;width:600px;height:58px;background:#3e3e3e;"></div>
<div style="left:952px;top:28px;width:32px;height:32px;background:#9c9c9c;"></div>
<div style="left:959px;top:34.5px;width:18px;height:20px;background:#555555;"></div>
<div style="left:959px;top:34.5px;width:18px;height:4px;background:#5e5e5e;"></div>
<div class="t" style="left:991.8000000000001px;top:28.60px;font-size:13px;color:#bcbcbc;letter-spacing:0.3px;">Shader Graphs_New Shader Graph 1 (Material)</div>
<svg style="left:1500px;top:29.5px;" width="12" height="12" viewBox="0 0 12 12"><circle cx="6" cy="6" r="5" fill="#c8c8c8"/><path d="M4.2 4.6 A1.9 1.9 0 1 1 6.9 6.2 Q6 6.7 6 7.6" fill="none" stroke="#3e3e3e" stroke-width="1.5"/><rect x="5.2" y="8.4" width="1.6" height="1.5" fill="#3e3e3e"/></svg>
<svg style="left:1516px;top:29px;" width="12" height="12" viewBox="0 0 12 12"><path d="M0.7 3.5 H3 M4.5 3.5 H11 M0.7 8.5 H2 M4 8.5 H11" stroke="#d0d0d0" stroke-width="1.2"/><path d="M7.3 1.6 V5.4 M5 6.8 V10.5" stroke="#d0d0d0" stroke-width="1.5"/></svg>
<svg style="left:1536px;top:29px;" width="4" height="12" viewBox="0 0 4 12"><rect x="1" y="1" width="2" height="2" fill="#d0d0d0"/><rect x="1" y="4.8" width="2" height="2" fill="#d0d0d0"/><rect x="1" y="8.6" width="2" height="2" fill="#d0d0d0"/></svg>
<div class="t" style="left:988.5px;top:53.44px;font-size:12px;color:#c4c4c4;letter-spacing:0.3px;">Shader</div>
<div style="left:1041px;top:51px;width:406px;height:16px;background:#515151;border-radius:3px;box-shadow:0 1px 0 #232323;"></div>
<div class="t" style="left:1044.8px;top:53.14px;font-size:12px;color:#d4d4d4;letter-spacing:0.3px;">Shader Graphs/New Shader Graph 1</div>
<svg style="left:1434px;top:57.0px;" width="8" height="5" viewBox="0 0 8 5"><polygon points="0,0.2 8,0.2 4,4.7" fill="#c4c4c4"/></svg>
<div style="left:1452px;top:51px;width:42px;height:16px;background:#585858;border-radius:3px;box-shadow:0 1px 0 #232323;"></div>
<div class="t" style="left:1457.2px;top:53.04px;font-size:12px;color:#d4d4d4;letter-spacing:0.3px;">Edit...</div>
<div style="left:1499px;top:51px;width:42px;height:16px;background:#515151;border-radius:3px;box-shadow:0 1px 0 #232323;"></div>
<svg style="left:1507px;top:53px;" width="12" height="11" viewBox="0 0 12 11"><path d="M3.2 2.5 H10.2 M3.2 6 H10.2 M3.2 8.7 H10.2" stroke="#d0d0d0" stroke-width="1"/><path d="M1.5 1 V4 M0 2.5 H3 M1.5 5 V9.5" stroke="#d0d0d0" stroke-width="0.8"/></svg>
<svg style="left:1528px;top:57px;" width="8" height="5" viewBox="0 0 8 5"><polygon points="0,0.2 8,0.2 4,4.7" fill="#c4c4c4"/></svg>
<div style="left:946px;top:80px;width:600px;height:1px;background:#1f1f1f;"></div>
<div style="left:946px;top:81px;width:600px;height:2.5px;background:#3a3a3a;"></div>
<div style="left:946px;top:83.5px;width:600px;height:1px;background:#232323;"></div>
<div style="left:946px;top:84.5px;width:600px;height:17.299999999999997px;background:#313131;background-image:repeating-conic-gradient(rgba(255,255,255,0.035) 0 25%, rgba(0,0,0,0.06) 0 50%);background-size:2px 2px;"></div>
<svg style="left:965px;top:89.0px;" width="8.8" height="7.8" viewBox="0 0 8.8 7.8"><polygon points="0,0 8.8,0 4.4,7.8" fill="#7c7c7c"/></svg>
<div class="t" style="left:978.8000000000001px;top:87.64px;font-size:12px;color:#cdcdcd;font-weight:bold;letter-spacing:0.2px;">Surface Options</div>
<div class="t" style="left:982.7px;top:107.54px;font-size:12px;color:#c4c4c4;letter-spacing:0.3px;">Surface Type</div>
<div class="t" style="left:997.7px;top:129.84px;font-size:12px;color:#c4c4c4;letter-spacing:0.3px;">Rendering Pass</div>
<div class="t" style="left:997.7px;top:149.64px;font-size:12px;color:#c4c4c4;letter-spacing:0.3px;">Cull Mode</div>
<div class="t" style="left:982.7px;top:169.24px;font-size:12px;color:#c4c4c4;letter-spacing:0.3px;">Double-Sided</div>
<div class="t" style="left:982.7px;top:189.64px;font-size:12px;color:#5ca8ea;letter-spacing:0.3px;">Double-Sided GI</div>
<div class="t" style="left:982.7px;top:209.64px;font-size:12px;color:#c4c4c4;letter-spacing:0.3px;">Material Type</div>
<div class="t" style="left:982.7px;top:230.14px;font-size:12px;color:#c4c4c4;letter-spacing:0.3px;">Receive Decals</div>
<div class="t" style="left:982.7px;top:250.14px;font-size:12px;color:#c4c4c4;letter-spacing:0.3px;">Receive SSR</div>
<div style="left:1214px;top:104.8px;width:324px;height:16.3px;background:#515151;border-radius:3px;box-shadow:0 1px 0 #232323;"></div>
<div class="t" style="left:1217.8px;top:107.09px;font-size:12px;color:#d4d4d4;letter-spacing:0.3px;">Opaque</div>
<svg style="left:1525px;top:110.95px;" width="8" height="5" viewBox="0 0 8 5"><polygon points="0,0.2 8,0.2 4,4.7" fill="#c4c4c4"/></svg>
<div style="left:1214px;top:126.8px;width:324px;height:16.2px;background:#515151;border-radius:3px;box-shadow:0 1px 0 #232323;"></div>
<div class="t" style="left:1217.8px;top:129.04px;font-size:12px;color:#d4d4d4;letter-spacing:0.3px;">Default</div>
<svg style="left:1525px;top:132.9px;" width="8" height="5" viewBox="0 0 8 5"><polygon points="0,0.2 8,0.2 4,4.7" fill="#c4c4c4"/></svg>
<div style="left:1214px;top:147px;width:324px;height:16.5px;background:#515151;border-radius:3px;box-shadow:0 1px 0 #232323;"></div>
<div class="t" style="left:1217.8px;top:149.39px;font-size:12px;color:#d4d4d4;letter-spacing:0.3px;">Back</div>
<svg style="left:1525px;top:153.25px;" width="8" height="5" viewBox="0 0 8 5"><polygon points="0,0.2 8,0.2 4,4.7" fill="#c4c4c4"/></svg>
<div style="left:1214px;top:168.2px;width:14px;height:14px;background:#2a2a2a;border-radius:2px;box-shadow:inset 0 0 0 1px #212121;background-image:radial-gradient(rgba(255,255,255,0.035) 0.6px, transparent 0.7px);background-size:3px 3px;"></div>
<div style="left:1214px;top:186.3px;width:324px;height:17.5px;background:#515151;border-radius:3px;box-shadow:inset 0 0 0 1px #3d80d0;"></div>
<div class="t" style="left:1217.8px;top:189.19px;font-size:12px;color:#d4d4d4;letter-spacing:0.3px;">Auto</div>
<svg style="left:1525px;top:193.05px;" width="8" height="5" viewBox="0 0 8 5"><polygon points="0,0.2 8,0.2 4,4.7" fill="#c4c4c4"/></svg>
<div style="left:1214px;top:207px;width:324px;height:16px;background:#515151;border-radius:3px;box-shadow:0 1px 0 #232323;"></div>
<div class="t" style="left:1217.8px;top:209.14px;font-size:12px;color:#d4d4d4;letter-spacing:0.3px;">Standard</div>
<svg style="left:1525px;top:213.0px;" width="8" height="5" viewBox="0 0 8 5"><polygon points="0,0.2 8,0.2 4,4.7" fill="#c4c4c4"/></svg>
<div style="left:1214px;top:228.5px;width:14px;height:14px;background:#2a2a2a;border-radius:2px;box-shadow:inset 0 0 0 1px #212121;background-image:radial-gradient(rgba(255,255,255,0.035) 0.6px, transparent 0.7px);background-size:3px 3px;"></div>
<div style="left:1214px;top:248.5px;width:14px;height:14px;background:#2a2a2a;border-radius:2px;box-shadow:inset 0 0 0 1px #212121;background-image:radial-gradient(rgba(255,255,255,0.035) 0.6px, transparent 0.7px);background-size:3px 3px;"></div>
<div style="left:946px;top:272px;width:600px;height:1px;background:#232323;"></div>
<div style="left:946px;top:273px;width:600px;height:16.5px;background:#313131;background-image:repeating-conic-gradient(rgba(255,255,255,0.035) 0 25%, rgba(0,0,0,0.06) 0 50%);background-size:2px 2px;"></div>
<svg style="left:965px;top:277.5px;" width="8.8" height="7.8" viewBox="0 0 8.8 7.8"><polygon points="0,0 8.8,0 4.4,7.8" fill="#7c7c7c"/></svg>
<div class="t" style="left:978.8000000000001px;top:276.14px;font-size:12px;color:#cdcdcd;font-weight:bold;letter-spacing:0.2px;">Exposed Properties</div>
<div class="t" style="left:982.7px;top:295.64px;font-size:12px;color:#c4c4c4;letter-spacing:0.3px;">Diffusion Profile</div>
<div style="left:1214px;top:292.3px;width:324px;height:17.6px;background:#2a2a2a;border-radius:3px;box-shadow:inset 0 0 0 1px #232323;"></div>
<svg style="left:1217px;top:296.2px;" width="11" height="11" viewBox="0 0 11 11"><path d="M1.5 0.5 H7.5 L10 3 V10.5 H1.5Z" fill="#e6e9ee"/><path d="M7.5 0.5 V3 H10" fill="#b8c0ca"/><circle cx="3" cy="5.5" r="1.8" fill="#3d86d8"/><circle cx="3.2" cy="8.6" r="1.6" fill="#2f6fc0"/><circle cx="5.2" cy="7" r="1.1" fill="#7fb2e8"/></svg>
<div class="t" style="left:1230.2px;top:296.44px;font-size:12px;color:#d0d0d0;letter-spacing:0.3px;">Blue (Diffusion Profile Settings)</div>
<div style="left:1519px;top:292.8px;width:18.5px;height:16px;background:#333333;border-radius:0 3px 3px 0;"></div>
<svg style="left:1522px;top:294.5px;" width="13" height="13" viewBox="0 0 13 13"><circle cx="6.5" cy="6.5" r="5" fill="none" stroke="#c0c0c0" stroke-width="1.2"/><circle cx="6.5" cy="6.5" r="2" fill="#c0c0c0"/></svg>
<div style="left:946px;top:318px;width:600px;height:1px;background:#232323;"></div>
<div style="left:946px;top:319px;width:600px;height:16.5px;background:#313131;background-image:repeating-conic-gradient(rgba(255,255,255,0.035) 0 25%, rgba(0,0,0,0.06) 0 50%);background-size:2px 2px;"></div>
<svg style="left:965px;top:323.3px;" width="8.8" height="7.8" viewBox="0 0 8.8 7.8"><polygon points="0,0 8.8,0 4.4,7.8" fill="#7c7c7c"/></svg>
<div class="t" style="left:978.8000000000001px;top:321.94px;font-size:12px;color:#cdcdcd;font-weight:bold;letter-spacing:0.2px;">Advanced Options</div>
<div class="t" style="left:982.7px;top:341.94px;font-size:12px;color:#c4c4c4;letter-spacing:0.3px;">Enable GPU Instancing</div>
<div style="left:1214px;top:341.3px;width:14px;height:14px;background:#2a2a2a;border-radius:2px;box-shadow:inset 0 0 0 1px #212121;background-image:radial-gradient(rgba(255,255,255,0.035) 0.6px, transparent 0.7px);background-size:3px 3px;"></div>
<div class="t" style="left:982.7px;top:365.64px;font-size:12px;color:#c4c4c4;letter-spacing:0.3px;">Global Illumination</div>
<div style="left:1214px;top:362.9px;width:324px;height:16.3px;background:#515151;border-radius:3px;box-shadow:0 1px 0 #232323;"></div>
<div class="t" style="left:1217.8px;top:365.19px;font-size:12px;color:#d4d4d4;letter-spacing:0.3px;">None</div>
<svg style="left:1525px;top:369.04999999999995px;" width="8" height="5" viewBox="0 0 8 5"><polygon points="0,0.2 8,0.2 4,4.7" fill="#c4c4c4"/></svg>
<div class="t" style="left:982.7px;top:385.84px;font-size:12px;color:#c4c4c4;letter-spacing:0.3px;">Motion Vector For Vertex Animation</div>
<div style="left:1214px;top:384.3px;width:14px;height:14px;background:#2a2a2a;border-radius:2px;box-shadow:inset 0 0 0 1px #212121;background-image:radial-gradient(rgba(255,255,255,0.035) 0.6px, transparent 0.7px);background-size:3px 3px;"></div>
<div class="t" style="left:982.7px;top:406.34px;font-size:12px;color:#c4c4c4;letter-spacing:0.3px;">Add Precomputed Velocity</div>
<div style="left:1214px;top:404px;width:14px;height:14px;background:#2a2a2a;border-radius:2px;box-shadow:inset 0 0 0 1px #212121;background-image:radial-gradient(rgba(255,255,255,0.035) 0.6px, transparent 0.7px);background-size:3px 3px;"></div>
<div style="left:1214px;top:224px;width:201px;height:72px;background:#f0f0f0;box-shadow:1px 2px 4px rgba(0,0,0,0.45);"></div>
<div style="left:1217px;top:249.3px;width:21.8px;height:21.5px;background:#8ccbf0;"></div>
<svg style="left:1221px;top:253px;" width="14" height="14" viewBox="0 0 14 14"><polyline points="2.5,7 5.5,10.3 11.5,3.5" fill="none" stroke="#222" stroke-width="1.5"/></svg>
<div class="t" style="left:1248.6000000000001px;top:231.84px;font-size:12px;color:#101010;letter-spacing:-0.2px;">SubsurfaceScattering</div>
<div class="t" style="left:1248.6000000000001px;top:254.34px;font-size:12px;color:#101010;letter-spacing:-0.2px;">Standard</div>
<div class="t" style="left:1248.6000000000001px;top:276.14px;font-size:12px;color:#101010;letter-spacing:-0.2px;">Translucent</div>
</body></html>
